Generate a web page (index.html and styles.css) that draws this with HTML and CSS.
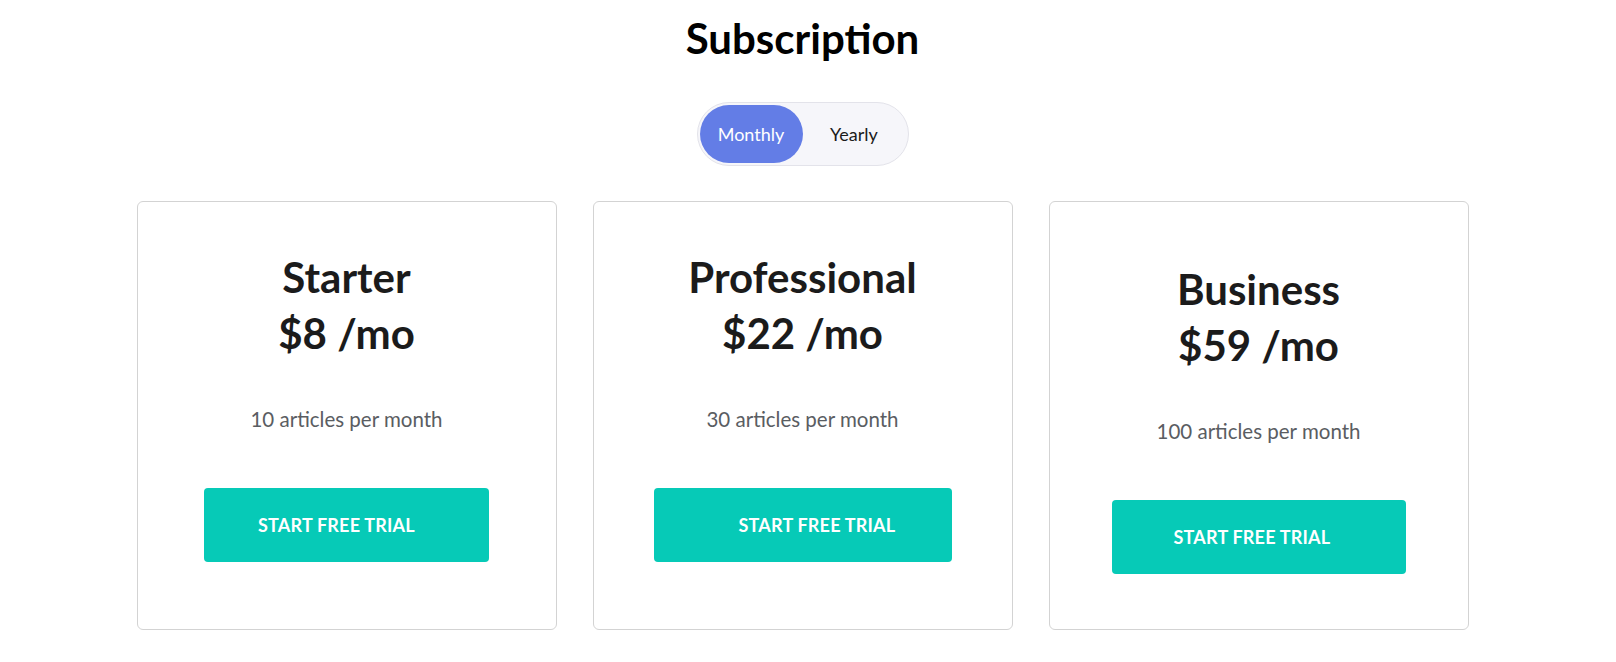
FILE: index.html
```html
<!DOCTYPE html>
<html lang="en">
<head>
    <meta charset="UTF-8">
    <meta name="viewport" content="width=device-width, initial-scale=1.0">
    <title>Subscription</title>
    <link rel="stylesheet" href="styles.css">
</head>
<body>
    <main class="pricing">
        <h1>Subscription</h1>

        <div class="toggle">
            <button class="toggle-option active" type="button">Monthly</button>
            <button class="toggle-option" type="button">Yearly</button>
        </div>

        <section class="plans">
            <div class="card">
                <h2 class="plan-name">Starter</h2>
                <p class="plan-price">$8 /mo</p>
                <p class="plan-desc">10 articles per month</p>
                <a class="trial-btn trial-starter" href="#">Start free trial</a>
            </div>

            <div class="card">
                <h2 class="plan-name">Professional</h2>
                <p class="plan-price">$22 /mo</p>
                <p class="plan-desc">30 articles per month</p>
                <a class="trial-btn trial-pro" href="#">Start free trial</a>
            </div>

            <div class="card card-business">
                <h2 class="plan-name">Business</h2>
                <p class="plan-price">$59 /mo</p>
                <p class="plan-desc">100 articles per month</p>
                <a class="trial-btn trial-business" href="#">Start free trial</a>
            </div>
        </section>
    </main>
</body>
</html>
```

FILE: styles.css
```css
/* General Styles */
body {
    margin: 0;
    font-family: 'Lato', 'Noto Sans', sans-serif;
    background-color: #ffffff;
    color: #1b1b1b;
}

.pricing {
    display: flex;
    flex-direction: column;
    align-items: center;
    padding-top: 12px;
    padding-right: 11px;
}

h1 {
    margin: 0;
    font-size: 42px;
    line-height: 52px;
    font-weight: 700;
    color: #000;
}

/* Monthly / Yearly switch */
.toggle {
    display: flex;
    margin-top: 38px;
    padding: 2px;
    background-color: #f6f6fa;
    border: 1px solid #e3e3ea;
    border-radius: 32px;
}

.toggle-option {
    width: 103px;
    height: 58px;
    border: none;
    border-radius: 29px;
    background: transparent;
    font-family: inherit;
    font-size: 18px;
    color: #1b1b1b;
    cursor: pointer;
}

.toggle-option.active {
    background-color: #637de6;
    color: #ffffff;
}

/* Plan cards */
.plans {
    display: flex;
    gap: 36px;
    margin-top: 35px;
}

.card {
    box-sizing: border-box;
    width: 420px;
    height: 429px;
    padding-top: 47px;
    border: 1px solid #d3d3d3;
    border-radius: 6px;
    display: flex;
    flex-direction: column;
    align-items: center;
    text-align: center;
}

.card-business {
    padding-top: 59px;
}

.plan-name,
.plan-price {
    margin: 0;
    font-size: 42px;
    line-height: 56px;
    font-weight: 700;
}

.plan-desc {
    margin: 46px 0 0;
    font-size: 20.5px;
    line-height: 24px;
    color: #5a5d62;
}

/* Trial button */
.trial-btn {
    box-sizing: border-box;
    display: flex;
    align-items: center;
    height: 74px;
    margin-top: 57px;
    border-radius: 4px;
    background-color: #06cab7;
    color: #ffffff;
    text-decoration: none;
    text-transform: uppercase;
    font-size: 18px;
    font-weight: 700;
    letter-spacing: 0.2px;
}

.trial-starter {
    width: 285px;
    padding-left: 54px;
}

.trial-pro {
    width: 298px;
    padding-left: 85px;
}

.trial-business {
    width: 294px;
    padding-left: 62px;
}
```
